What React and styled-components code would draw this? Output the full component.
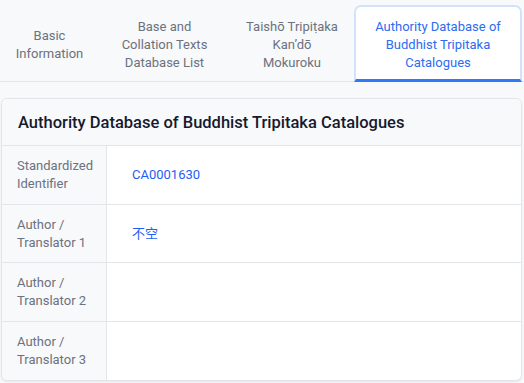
import React from "react";
import styled, { createGlobalStyle } from "styled-components";

const Global = createGlobalStyle`
  html, body { margin: 0; padding: 0; background: #f8f9fa; }
  body { font-family: Roboto, "Noto Sans", "Noto Sans CJK SC", sans-serif; }
  * { box-sizing: border-box; }
`;

const Page = styled.div`
  width: 524px;
  height: 383px;
  padding: 5px 2px 0 1px;
  background: #f8f9fa;
  overflow: hidden;
`;

const TabList = styled.div`
  display: flex;
  align-items: stretch;
  margin-left: -1px;
  margin-right: -2px;
  border-bottom: 1px solid #e3e5e8;
`;

const Tab = styled.div`
  width: ${(p) => p.$w}px;
  flex: none;
  padding: 11px ${(p) => p.$px}px 7px;
  font-size: 13px;
  line-height: 18px;
  text-align: center;
  display: flex;
  align-items: center;
  justify-content: center;
  color: ${(p) => (p.$active ? "#2d6cf0" : "#6b7280")};
  background: ${(p) => (p.$active ? "#ffffff" : "transparent")};
  border: 2px solid ${(p) => (p.$active ? "#d3e2fb" : "transparent")};
  border-bottom: ${(p) => (p.$active ? "3px solid #2f7bf5" : "3px solid transparent")};
  border-radius: 7px 7px 0 0;
  margin-bottom: -1px;
`;

const Card = styled.div`
  margin-top: 16px;
  background: #ffffff;
  border: 1px solid #e3e5e8;
  border-radius: 6px;
  box-shadow: 0 1px 2px rgba(0, 0, 0, 0.08);
  overflow: hidden;
`;

const CardHeader = styled.div`
  height: 47px;
  padding: 0 16px;
  display: flex;
  align-items: center;
  background: #f8f9fa;
  border-bottom: 1px solid #e3e5e8;
  font-size: 16.5px;
  font-weight: 500;
  color: #161a30;
`;

const Row = styled.div`
  display: grid;
  grid-template-columns: 105px 1fr;
  height: ${(p) => p.$h}px;
  border-bottom: ${(p) => (p.$last ? "none" : "1px solid #e3e5e8")};
`;

const Label = styled.div`
  background: #f8f9fa;
  border-right: 1px solid #e3e5e8;
  padding: 0 8px 0 15px;
  display: flex;
  align-items: center;
  font-size: 13px;
  line-height: 18px;
  color: #6b7280;
`;

const Value = styled.div`
  padding: 0 25px;
  display: flex;
  align-items: center;
  font-size: 13px;
  line-height: 18px;
  color: #1f5ef2;
`;

const tabs = [
  { label: "Basic Information", w: 99, px: 16 },
  { label: "Base and Collation Texts Database List", w: 131, px: 16 },
  { label: "Taishō Tripiṭaka Kan’dō Mokuroku", w: 124, px: 14 },
  { label: "Authority Database of Buddhist Tripitaka Catalogues", w: 168, px: 16, active: true },
];

const rows = [
  { label: "Standardized Identifier", value: "CA0001630", h: 59 },
  { label: "Author / Translator 1", value: "不空", h: 58 },
  { label: "Author / Translator 2", value: "", h: 59 },
  { label: "Author / Translator 3", value: "", h: 58 },
];

export default function App() {
  return (
    <Page>
      <Global />
      <TabList>
        {tabs.map((t) => (
          <Tab key={t.label} $w={t.w} $px={t.px} $active={t.active}>
            {t.label}
          </Tab>
        ))}
      </TabList>
      <Card>
        <CardHeader>Authority Database of Buddhist Tripitaka Catalogues</CardHeader>
        {rows.map((r, i) => (
          <Row key={r.label} $h={r.h} $last={i === rows.length - 1}>
            <Label>{r.label}</Label>
            <Value>{r.value}</Value>
          </Row>
        ))}
      </Card>
    </Page>
  );
}
